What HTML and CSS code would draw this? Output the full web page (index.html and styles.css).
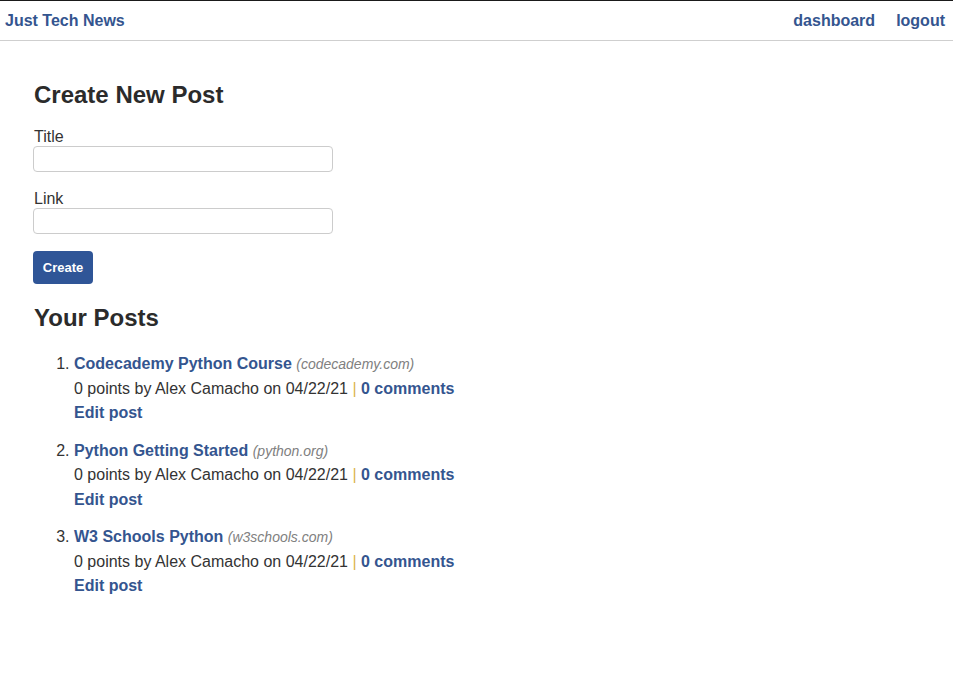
FILE: index.html
```html
<!DOCTYPE html>
<html lang="en">
<head>
<meta charset="utf-8">
<title>Just Tech News</title>
<link rel="stylesheet" href="styles.css">
</head>
<body>
<header class="site-header">
  <a class="brand" href="#">Just Tech News</a>
  <nav class="nav">
    <a href="#">dashboard</a>
    <a href="#">logout</a>
  </nav>
</header>
<main class="main">
  <section class="create">
    <h2 class="heading">Create New Post</h2>
    <form class="form">
      <div class="field">
        <label for="title">Title</label>
        <input id="title" type="text">
      </div>
      <div class="field">
        <label for="link">Link</label>
        <input id="link" type="text">
      </div>
      <button class="btn" type="button">Create</button>
    </form>
  </section>
  <section class="posts">
    <h2 class="heading">Your Posts</h2>
    <ol class="post-list">
      <li>
        <div><a class="post-title" href="#">Codecademy Python Course</a> <span class="domain">(codecademy.com)</span></div>
        <div class="meta">0 points by Alex Camacho on 04/22/21 <span class="sep">|</span> <a href="#">0 comments</a></div>
        <div><a href="#">Edit post</a></div>
      </li>
      <li>
        <div><a class="post-title" href="#">Python Getting Started</a> <span class="domain">(python.org)</span></div>
        <div class="meta">0 points by Alex Camacho on 04/22/21 <span class="sep">|</span> <a href="#">0 comments</a></div>
        <div><a href="#">Edit post</a></div>
      </li>
      <li>
        <div><a class="post-title" href="#">W3 Schools Python</a> <span class="domain">(w3schools.com)</span></div>
        <div class="meta">0 points by Alex Camacho on 04/22/21 <span class="sep">|</span> <a href="#">0 comments</a></div>
        <div><a href="#">Edit post</a></div>
      </li>
    </ol>
  </section>
</main>
</body>
</html>
```

FILE: styles.css
```css
html, body {
  margin: 0;
  padding: 0;
  background: #fff;
}
body {
  font-family: "Liberation Sans", Arial, sans-serif;
  font-size: 16px;
  color: #333;
}
a {
  color: #34558f;
  font-weight: bold;
  text-decoration: none;
}
.site-header {
  display: flex;
  align-items: center;
  justify-content: space-between;
  height: 39px;
  border-top: 1px solid #1a1a1a;
  border-bottom: 1px solid #cfcfcf;
  padding: 0 8px 0 5px;
}
.nav {
  display: flex;
  gap: 21px;
}
.main {
  padding: 0 34px;
}
.heading {
  font-size: 24px;
  font-weight: bold;
  color: #2b2b2b;
  margin: 40px 0 18px;
  line-height: 28px;
}
.posts .heading {
  margin-top: 20px;
  margin-bottom: 20px;
}
.form {
  display: flex;
  flex-direction: column;
  align-items: flex-start;
}
.field {
  display: flex;
  flex-direction: column;
  margin-bottom: 17px;
}
.field label {
  line-height: 19px;
}
.field input {
  box-sizing: border-box;
  width: 300px;
  height: 26px;
  margin: 0 0 0 -1px;
  border: 1px solid #ccc;
  border-radius: 4px;
  font: inherit;
  padding: 2px 6px;
}
.btn {
  margin-left: -1px;
  background: #2f5597;
  color: #fff;
  font-family: "Liberation Sans", Arial, sans-serif;
  font-weight: bold;
  font-size: 13px;
  border: none;
  border-radius: 4px;
  width: 60px;
  height: 33px;
  padding: 0;
}
.post-list {
  margin: 0;
  padding-left: 40px;
}
.post-list li {
  line-height: 24.5px;
  margin-bottom: 13px;
}
.domain {
  font-style: italic;
  font-size: 14px;
  color: #808080;
}
.sep {
  color: #dcb44a;
}
```
